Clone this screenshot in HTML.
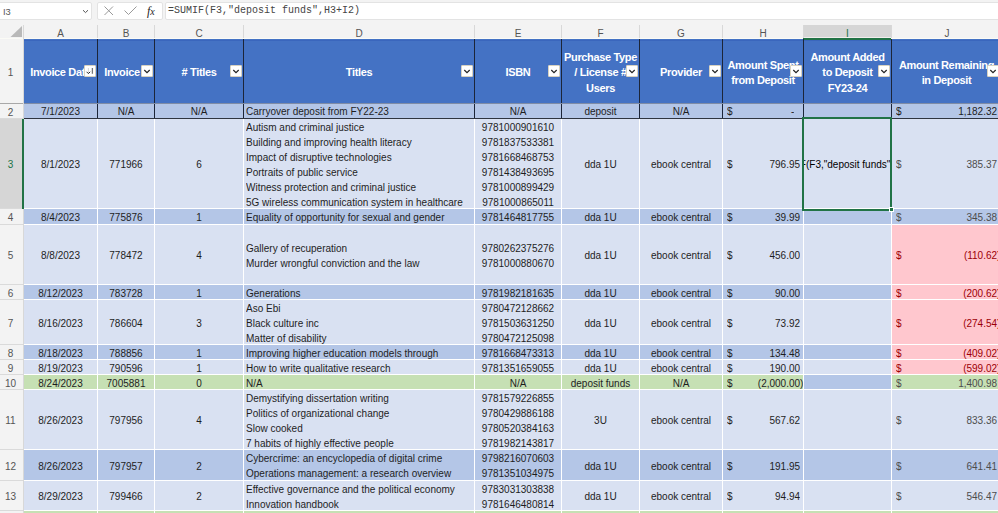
<!DOCTYPE html><html><head><meta charset="utf-8"><style>
*{margin:0;padding:0}
html,body{width:998px;height:513px;overflow:hidden;background:#f3f3f3;}
body{position:relative;font-family:"Liberation Sans",sans-serif;}
body>div,body>svg{position:absolute;}
.ui{position:absolute;white-space:pre;}
.t{display:flex;align-items:center;overflow:hidden;font-size:10px;line-height:15px;white-space:pre;}
.t span{display:block;position:relative;top:1px;}
.h{display:flex;align-items:center;overflow:hidden;font-size:11px;letter-spacing:-0.35px;line-height:15.7px;font-weight:bold;white-space:pre;}
.h span{display:block;position:relative;top:2.3px;}
.fb{width:12px;height:12px;box-sizing:border-box;background:#fff;border:1px solid #d8d2c0;border-radius:1px;}
</style></head><body><div style="left:0px;top:0px;width:998px;height:39px;background:#f3f3f3;"></div>
<div style="left:-3px;top:2px;width:95px;height:18px;background:#fff;box-sizing:border-box;border:1px solid #e3e3e3;border-radius:2px;"></div>
<div class="ui" style="left:3px;top:7px;font-size:9.3px;color:#555;">I3</div>
<svg style="position:absolute;left:82px;top:9px" width="7" height="5"><path d="M1 1.2 L3.5 3.6 L6 1.2" stroke="#555" stroke-width="1" fill="none"/></svg>
<div style="left:97px;top:2px;width:66px;height:18px;background:#fff;box-sizing:border-box;border:1px solid #e3e3e3;border-radius:2px;"></div>
<svg style="position:absolute;left:103px;top:5px" width="12" height="11"><path d="M1.5 1.5 L10 10 M10 1.5 L1.5 10" stroke="#9a9a9a" stroke-width="1" fill="none"/></svg>
<svg style="position:absolute;left:123px;top:5px" width="15" height="11"><path d="M1.5 5.5 L5.5 9.5 L13.5 1.5" stroke="#9a9a9a" stroke-width="1" fill="none"/></svg>
<div class="ui" style="left:147px;top:4px;font-family:'Liberation Serif',serif;font-style:italic;font-size:12px;color:#222;">f<span style="font-size:10px">x</span></div>
<div style="left:165px;top:2px;width:840px;height:18px;background:#fff;box-sizing:border-box;border:1px solid #e3e3e3;border-radius:2px;"></div>
<div class="ui" style="left:168px;top:4.5px;font-family:'Liberation Mono',monospace;font-size:10px;color:#444;white-space:pre;">=SUMIF(F3,"deposit funds",H3+I2)</div>
<div style="left:0px;top:38px;width:998px;height:1px;background:#fbfbf6;"></div>
<div style="left:803px;top:25px;width:88px;height:12px;background:#d6d6d6;"></div>
<div style="left:803px;top:37px;width:88px;height:1px;background:#f2eeee;"></div>
<div style="left:97px;top:25px;width:1px;height:13px;background:#d8d8d8;"></div>
<div class="ui" style="left:24px;top:27px;width:73px;text-align:center;font-size:10px;line-height:13px;color:#555;">A</div>
<div style="left:154px;top:25px;width:1px;height:13px;background:#d8d8d8;"></div>
<div class="ui" style="left:98px;top:27px;width:56px;text-align:center;font-size:10px;line-height:13px;color:#555;">B</div>
<div style="left:243px;top:25px;width:1px;height:13px;background:#d8d8d8;"></div>
<div class="ui" style="left:155px;top:27px;width:88px;text-align:center;font-size:10px;line-height:13px;color:#555;">C</div>
<div style="left:474px;top:25px;width:1px;height:13px;background:#d8d8d8;"></div>
<div class="ui" style="left:244px;top:27px;width:230px;text-align:center;font-size:10px;line-height:13px;color:#555;">D</div>
<div style="left:561px;top:25px;width:1px;height:13px;background:#d8d8d8;"></div>
<div class="ui" style="left:475px;top:27px;width:86px;text-align:center;font-size:10px;line-height:13px;color:#555;">E</div>
<div style="left:639px;top:25px;width:1px;height:13px;background:#d8d8d8;"></div>
<div class="ui" style="left:562px;top:27px;width:77px;text-align:center;font-size:10px;line-height:13px;color:#555;">F</div>
<div style="left:722px;top:25px;width:1px;height:13px;background:#d8d8d8;"></div>
<div class="ui" style="left:640px;top:27px;width:82px;text-align:center;font-size:10px;line-height:13px;color:#555;">G</div>
<div style="left:803px;top:25px;width:1px;height:13px;background:#d8d8d8;"></div>
<div class="ui" style="left:723px;top:27px;width:80px;text-align:center;font-size:10px;line-height:13px;color:#555;">H</div>
<div style="left:891px;top:25px;width:1px;height:13px;background:#d8d8d8;"></div>
<div class="ui" style="left:804px;top:27px;width:87px;text-align:center;font-size:10px;line-height:13px;color:#217346;">I</div>
<div class="ui" style="left:892px;top:27px;width:110px;text-align:center;font-size:10px;line-height:13px;color:#555;">J</div>
<svg style="position:absolute;left:10px;top:25px" width="13" height="13"><path d="M12 1 L12 12 L0.5 12 Z" fill="#b9b9b9"/></svg>
<div style="left:23px;top:25px;width:1px;height:14px;background:#d8d8d8;"></div>
<div style="left:0px;top:39px;width:23px;height:474px;background:#f3f3f3;"></div>
<div style="left:23px;top:39px;width:1px;height:474px;background:#d8d8d8;"></div>
<div style="left:0px;top:103px;width:23px;height:1px;background:#a8a8a8;"></div>
<div class="ui" style="left:0px;top:40px;width:21px;height:64px;display:flex;align-items:center;justify-content:center;font-size:10px;color:#555;">1</div>
<div style="left:0px;top:118px;width:23px;height:1px;background:#dadada;"></div>
<div class="ui" style="left:0px;top:105px;width:21px;height:14px;display:flex;align-items:center;justify-content:center;font-size:10px;color:#555;">2</div>
<div style="left:0px;top:119px;width:22px;height:89px;background:#d6d6d6;"></div>
<div style="left:0px;top:208px;width:23px;height:1px;background:#dadada;"></div>
<div class="ui" style="left:0px;top:120px;width:21px;height:89px;display:flex;align-items:center;justify-content:center;font-size:10px;color:#217346;">3</div>
<div style="left:0px;top:224px;width:23px;height:1px;background:#dadada;"></div>
<div class="ui" style="left:0px;top:210px;width:21px;height:15px;display:flex;align-items:center;justify-content:center;font-size:10px;color:#555;">4</div>
<div style="left:0px;top:284px;width:23px;height:1px;background:#dadada;"></div>
<div class="ui" style="left:0px;top:226px;width:21px;height:59px;display:flex;align-items:center;justify-content:center;font-size:10px;color:#555;">5</div>
<div style="left:0px;top:299px;width:23px;height:1px;background:#dadada;"></div>
<div class="ui" style="left:0px;top:286px;width:21px;height:14px;display:flex;align-items:center;justify-content:center;font-size:10px;color:#555;">6</div>
<div style="left:0px;top:344px;width:23px;height:1px;background:#dadada;"></div>
<div class="ui" style="left:0px;top:301px;width:21px;height:44px;display:flex;align-items:center;justify-content:center;font-size:10px;color:#555;">7</div>
<div style="left:0px;top:359px;width:23px;height:1px;background:#dadada;"></div>
<div class="ui" style="left:0px;top:346px;width:21px;height:14px;display:flex;align-items:center;justify-content:center;font-size:10px;color:#555;">8</div>
<div style="left:0px;top:374px;width:23px;height:1px;background:#dadada;"></div>
<div class="ui" style="left:0px;top:361px;width:21px;height:14px;display:flex;align-items:center;justify-content:center;font-size:10px;color:#555;">9</div>
<div style="left:0px;top:389px;width:23px;height:1px;background:#dadada;"></div>
<div class="ui" style="left:0px;top:376px;width:21px;height:14px;display:flex;align-items:center;justify-content:center;font-size:10px;color:#555;">10</div>
<div style="left:0px;top:449px;width:23px;height:1px;background:#dadada;"></div>
<div class="ui" style="left:0px;top:391px;width:21px;height:59px;display:flex;align-items:center;justify-content:center;font-size:10px;color:#555;">11</div>
<div style="left:0px;top:480px;width:23px;height:1px;background:#dadada;"></div>
<div class="ui" style="left:0px;top:451px;width:21px;height:30px;display:flex;align-items:center;justify-content:center;font-size:10px;color:#555;">12</div>
<div style="left:0px;top:510px;width:23px;height:1px;background:#dadada;"></div>
<div class="ui" style="left:0px;top:482px;width:21px;height:29px;display:flex;align-items:center;justify-content:center;font-size:10px;color:#555;">13</div>
<div style="left:0px;top:530px;width:23px;height:1px;background:#dadada;"></div>
<div class="ui" style="left:0px;top:512px;width:21px;height:19px;display:flex;align-items:center;justify-content:center;font-size:10px;color:#555;">14</div>
<div style="left:22px;top:119px;width:2px;height:90px;background:#217346;"></div>
<div style="left:24px;top:39px;width:974px;height:474px;background:#ffffff;"></div>
<div style="left:24px;top:39px;width:73px;height:64px;background:#4472c4;"></div>
<div style="left:98px;top:39px;width:56px;height:64px;background:#4472c4;"></div>
<div style="left:155px;top:39px;width:88px;height:64px;background:#4472c4;"></div>
<div style="left:244px;top:39px;width:230px;height:64px;background:#4472c4;"></div>
<div style="left:475px;top:39px;width:86px;height:64px;background:#4472c4;"></div>
<div style="left:562px;top:39px;width:77px;height:64px;background:#4472c4;"></div>
<div style="left:640px;top:39px;width:82px;height:64px;background:#4472c4;"></div>
<div style="left:723px;top:39px;width:80px;height:64px;background:#4472c4;"></div>
<div style="left:804px;top:39px;width:87px;height:64px;background:#4472c4;"></div>
<div style="left:892px;top:39px;width:109px;height:64px;background:#4472c4;"></div>
<div style="left:24px;top:104px;width:73px;height:14px;background:#b4c6e7;"></div>
<div style="left:98px;top:104px;width:56px;height:14px;background:#b4c6e7;"></div>
<div style="left:155px;top:104px;width:88px;height:14px;background:#b4c6e7;"></div>
<div style="left:244px;top:104px;width:230px;height:14px;background:#b4c6e7;"></div>
<div style="left:475px;top:104px;width:86px;height:14px;background:#b4c6e7;"></div>
<div style="left:562px;top:104px;width:77px;height:14px;background:#b4c6e7;"></div>
<div style="left:640px;top:104px;width:82px;height:14px;background:#b4c6e7;"></div>
<div style="left:723px;top:104px;width:80px;height:14px;background:#b4c6e7;"></div>
<div style="left:804px;top:104px;width:87px;height:14px;background:#b4c6e7;"></div>
<div style="left:892px;top:104px;width:109px;height:14px;background:#b4c6e7;"></div>
<div style="left:24px;top:119px;width:73px;height:89px;background:#d9e1f2;"></div>
<div style="left:98px;top:119px;width:56px;height:89px;background:#d9e1f2;"></div>
<div style="left:155px;top:119px;width:88px;height:89px;background:#d9e1f2;"></div>
<div style="left:244px;top:119px;width:230px;height:89px;background:#d9e1f2;"></div>
<div style="left:475px;top:119px;width:86px;height:89px;background:#d9e1f2;"></div>
<div style="left:562px;top:119px;width:77px;height:89px;background:#d9e1f2;"></div>
<div style="left:640px;top:119px;width:82px;height:89px;background:#d9e1f2;"></div>
<div style="left:723px;top:119px;width:80px;height:89px;background:#d9e1f2;"></div>
<div style="left:804px;top:119px;width:87px;height:89px;background:#d9e1f2;"></div>
<div style="left:892px;top:119px;width:109px;height:89px;background:#d9e1f2;"></div>
<div style="left:24px;top:209px;width:73px;height:15px;background:#b4c6e7;"></div>
<div style="left:98px;top:209px;width:56px;height:15px;background:#b4c6e7;"></div>
<div style="left:155px;top:209px;width:88px;height:15px;background:#b4c6e7;"></div>
<div style="left:244px;top:209px;width:230px;height:15px;background:#b4c6e7;"></div>
<div style="left:475px;top:209px;width:86px;height:15px;background:#b4c6e7;"></div>
<div style="left:562px;top:209px;width:77px;height:15px;background:#b4c6e7;"></div>
<div style="left:640px;top:209px;width:82px;height:15px;background:#b4c6e7;"></div>
<div style="left:723px;top:209px;width:80px;height:15px;background:#b4c6e7;"></div>
<div style="left:804px;top:209px;width:87px;height:15px;background:#b4c6e7;"></div>
<div style="left:892px;top:209px;width:109px;height:15px;background:#b4c6e7;"></div>
<div style="left:24px;top:225px;width:73px;height:59px;background:#d9e1f2;"></div>
<div style="left:98px;top:225px;width:56px;height:59px;background:#d9e1f2;"></div>
<div style="left:155px;top:225px;width:88px;height:59px;background:#d9e1f2;"></div>
<div style="left:244px;top:225px;width:230px;height:59px;background:#d9e1f2;"></div>
<div style="left:475px;top:225px;width:86px;height:59px;background:#d9e1f2;"></div>
<div style="left:562px;top:225px;width:77px;height:59px;background:#d9e1f2;"></div>
<div style="left:640px;top:225px;width:82px;height:59px;background:#d9e1f2;"></div>
<div style="left:723px;top:225px;width:80px;height:59px;background:#d9e1f2;"></div>
<div style="left:804px;top:225px;width:87px;height:59px;background:#d9e1f2;"></div>
<div style="left:892px;top:225px;width:109px;height:59px;background:#ffc7ce;"></div>
<div style="left:24px;top:285px;width:73px;height:14px;background:#b4c6e7;"></div>
<div style="left:98px;top:285px;width:56px;height:14px;background:#b4c6e7;"></div>
<div style="left:155px;top:285px;width:88px;height:14px;background:#b4c6e7;"></div>
<div style="left:244px;top:285px;width:230px;height:14px;background:#b4c6e7;"></div>
<div style="left:475px;top:285px;width:86px;height:14px;background:#b4c6e7;"></div>
<div style="left:562px;top:285px;width:77px;height:14px;background:#b4c6e7;"></div>
<div style="left:640px;top:285px;width:82px;height:14px;background:#b4c6e7;"></div>
<div style="left:723px;top:285px;width:80px;height:14px;background:#b4c6e7;"></div>
<div style="left:804px;top:285px;width:87px;height:14px;background:#b4c6e7;"></div>
<div style="left:892px;top:285px;width:109px;height:14px;background:#ffc7ce;"></div>
<div style="left:24px;top:300px;width:73px;height:44px;background:#d9e1f2;"></div>
<div style="left:98px;top:300px;width:56px;height:44px;background:#d9e1f2;"></div>
<div style="left:155px;top:300px;width:88px;height:44px;background:#d9e1f2;"></div>
<div style="left:244px;top:300px;width:230px;height:44px;background:#d9e1f2;"></div>
<div style="left:475px;top:300px;width:86px;height:44px;background:#d9e1f2;"></div>
<div style="left:562px;top:300px;width:77px;height:44px;background:#d9e1f2;"></div>
<div style="left:640px;top:300px;width:82px;height:44px;background:#d9e1f2;"></div>
<div style="left:723px;top:300px;width:80px;height:44px;background:#d9e1f2;"></div>
<div style="left:804px;top:300px;width:87px;height:44px;background:#d9e1f2;"></div>
<div style="left:892px;top:300px;width:109px;height:44px;background:#ffc7ce;"></div>
<div style="left:24px;top:345px;width:73px;height:14px;background:#b4c6e7;"></div>
<div style="left:98px;top:345px;width:56px;height:14px;background:#b4c6e7;"></div>
<div style="left:155px;top:345px;width:88px;height:14px;background:#b4c6e7;"></div>
<div style="left:244px;top:345px;width:230px;height:14px;background:#b4c6e7;"></div>
<div style="left:475px;top:345px;width:86px;height:14px;background:#b4c6e7;"></div>
<div style="left:562px;top:345px;width:77px;height:14px;background:#b4c6e7;"></div>
<div style="left:640px;top:345px;width:82px;height:14px;background:#b4c6e7;"></div>
<div style="left:723px;top:345px;width:80px;height:14px;background:#b4c6e7;"></div>
<div style="left:804px;top:345px;width:87px;height:14px;background:#b4c6e7;"></div>
<div style="left:892px;top:345px;width:109px;height:14px;background:#ffc7ce;"></div>
<div style="left:24px;top:360px;width:73px;height:14px;background:#d9e1f2;"></div>
<div style="left:98px;top:360px;width:56px;height:14px;background:#d9e1f2;"></div>
<div style="left:155px;top:360px;width:88px;height:14px;background:#d9e1f2;"></div>
<div style="left:244px;top:360px;width:230px;height:14px;background:#d9e1f2;"></div>
<div style="left:475px;top:360px;width:86px;height:14px;background:#d9e1f2;"></div>
<div style="left:562px;top:360px;width:77px;height:14px;background:#d9e1f2;"></div>
<div style="left:640px;top:360px;width:82px;height:14px;background:#d9e1f2;"></div>
<div style="left:723px;top:360px;width:80px;height:14px;background:#d9e1f2;"></div>
<div style="left:804px;top:360px;width:87px;height:14px;background:#d9e1f2;"></div>
<div style="left:892px;top:360px;width:109px;height:14px;background:#ffc7ce;"></div>
<div style="left:24px;top:375px;width:73px;height:14px;background:#c6e0b4;"></div>
<div style="left:98px;top:375px;width:56px;height:14px;background:#c6e0b4;"></div>
<div style="left:155px;top:375px;width:88px;height:14px;background:#c6e0b4;"></div>
<div style="left:244px;top:375px;width:230px;height:14px;background:#c6e0b4;"></div>
<div style="left:475px;top:375px;width:86px;height:14px;background:#c6e0b4;"></div>
<div style="left:562px;top:375px;width:77px;height:14px;background:#c6e0b4;"></div>
<div style="left:640px;top:375px;width:82px;height:14px;background:#c6e0b4;"></div>
<div style="left:723px;top:375px;width:80px;height:14px;background:#c6e0b4;"></div>
<div style="left:804px;top:375px;width:87px;height:14px;background:#b4c6e7;"></div>
<div style="left:892px;top:375px;width:109px;height:14px;background:#c6e0b4;"></div>
<div style="left:24px;top:390px;width:73px;height:59px;background:#d9e1f2;"></div>
<div style="left:98px;top:390px;width:56px;height:59px;background:#d9e1f2;"></div>
<div style="left:155px;top:390px;width:88px;height:59px;background:#d9e1f2;"></div>
<div style="left:244px;top:390px;width:230px;height:59px;background:#d9e1f2;"></div>
<div style="left:475px;top:390px;width:86px;height:59px;background:#d9e1f2;"></div>
<div style="left:562px;top:390px;width:77px;height:59px;background:#d9e1f2;"></div>
<div style="left:640px;top:390px;width:82px;height:59px;background:#d9e1f2;"></div>
<div style="left:723px;top:390px;width:80px;height:59px;background:#d9e1f2;"></div>
<div style="left:804px;top:390px;width:87px;height:59px;background:#d9e1f2;"></div>
<div style="left:892px;top:390px;width:109px;height:59px;background:#d9e1f2;"></div>
<div style="left:24px;top:450px;width:73px;height:30px;background:#b4c6e7;"></div>
<div style="left:98px;top:450px;width:56px;height:30px;background:#b4c6e7;"></div>
<div style="left:155px;top:450px;width:88px;height:30px;background:#b4c6e7;"></div>
<div style="left:244px;top:450px;width:230px;height:30px;background:#b4c6e7;"></div>
<div style="left:475px;top:450px;width:86px;height:30px;background:#b4c6e7;"></div>
<div style="left:562px;top:450px;width:77px;height:30px;background:#b4c6e7;"></div>
<div style="left:640px;top:450px;width:82px;height:30px;background:#b4c6e7;"></div>
<div style="left:723px;top:450px;width:80px;height:30px;background:#b4c6e7;"></div>
<div style="left:804px;top:450px;width:87px;height:30px;background:#b4c6e7;"></div>
<div style="left:892px;top:450px;width:109px;height:30px;background:#b4c6e7;"></div>
<div style="left:24px;top:481px;width:73px;height:29px;background:#d9e1f2;"></div>
<div style="left:98px;top:481px;width:56px;height:29px;background:#d9e1f2;"></div>
<div style="left:155px;top:481px;width:88px;height:29px;background:#d9e1f2;"></div>
<div style="left:244px;top:481px;width:230px;height:29px;background:#d9e1f2;"></div>
<div style="left:475px;top:481px;width:86px;height:29px;background:#d9e1f2;"></div>
<div style="left:562px;top:481px;width:77px;height:29px;background:#d9e1f2;"></div>
<div style="left:640px;top:481px;width:82px;height:29px;background:#d9e1f2;"></div>
<div style="left:723px;top:481px;width:80px;height:29px;background:#d9e1f2;"></div>
<div style="left:804px;top:481px;width:87px;height:29px;background:#d9e1f2;"></div>
<div style="left:892px;top:481px;width:109px;height:29px;background:#d9e1f2;"></div>
<div style="left:24px;top:511px;width:73px;height:19px;background:#c6e0b4;"></div>
<div style="left:98px;top:511px;width:56px;height:19px;background:#c6e0b4;"></div>
<div style="left:155px;top:511px;width:88px;height:19px;background:#c6e0b4;"></div>
<div style="left:244px;top:511px;width:230px;height:19px;background:#c6e0b4;"></div>
<div style="left:475px;top:511px;width:86px;height:19px;background:#c6e0b4;"></div>
<div style="left:562px;top:511px;width:77px;height:19px;background:#c6e0b4;"></div>
<div style="left:640px;top:511px;width:82px;height:19px;background:#c6e0b4;"></div>
<div style="left:723px;top:511px;width:80px;height:19px;background:#c6e0b4;"></div>
<div style="left:804px;top:511px;width:87px;height:19px;background:#c6e0b4;"></div>
<div style="left:892px;top:511px;width:109px;height:19px;background:#c6e0b4;"></div>
<div style="left:24px;top:40px;width:974px;height:1px;background:#3a66bd;"></div>
<div style="left:803px;top:38px;width:88px;height:2px;background:#217346;"></div>
<div style="left:97px;top:39px;width:1px;height:80px;background:#1c2538;"></div>
<div style="left:154px;top:39px;width:1px;height:80px;background:#1c2538;"></div>
<div style="left:243px;top:39px;width:1px;height:80px;background:#1c2538;"></div>
<div style="left:474px;top:39px;width:1px;height:80px;background:#1c2538;"></div>
<div style="left:561px;top:39px;width:1px;height:80px;background:#1c2538;"></div>
<div style="left:639px;top:39px;width:1px;height:80px;background:#1c2538;"></div>
<div style="left:722px;top:39px;width:1px;height:80px;background:#1c2538;"></div>
<div style="left:803px;top:39px;width:1px;height:80px;background:#1c2538;"></div>
<div style="left:891px;top:39px;width:1px;height:80px;background:#1c2538;"></div>
<div style="left:24px;top:103px;width:974px;height:1px;background:#7f8ca6;"></div>
<div style="left:24px;top:118px;width:974px;height:1px;background:#2e3440;"></div>
<div class="h" style="left:24px;top:39px;width:73px;height:64px;justify-content:center;text-align:center;color:#fff;"><span>Invoice Date</span></div>
<div class="h" style="left:98px;top:39px;width:48px;height:64px;justify-content:center;text-align:center;color:#fff;"><span>Invoice</span></div>
<div class="h" style="left:155px;top:39px;width:88px;height:64px;justify-content:center;text-align:center;color:#fff;"><span># Titles</span></div>
<div class="h" style="left:244px;top:39px;width:230px;height:64px;justify-content:center;text-align:center;color:#fff;"><span>Titles</span></div>
<div class="h" style="left:475px;top:39px;width:86px;height:64px;justify-content:center;text-align:center;color:#fff;"><span>ISBN</span></div>
<div class="h" style="left:562px;top:39px;width:77px;height:64px;justify-content:center;text-align:center;color:#fff;"><span>Purchase Type<br>/ License #<br>Users</span></div>
<div class="h" style="left:640px;top:39px;width:82px;height:64px;justify-content:center;text-align:center;color:#fff;"><span>Provider</span></div>
<div class="h" style="left:723px;top:39px;width:80px;height:64px;justify-content:center;text-align:center;color:#fff;"><span>Amount Spent<br>from Deposit</span></div>
<div class="h" style="left:804px;top:39px;width:87px;height:64px;justify-content:center;text-align:center;color:#fff;"><span>Amount Added<br>to Deposit<br>FY23-24</span></div>
<div class="h" style="left:892px;top:39px;width:109px;height:64px;justify-content:center;text-align:center;color:#fff;"><span>Amount Remaining<br>in Deposit</span></div>
<div class="fb" style="left:84px;top:65px;"></div>
<svg style="position:absolute;left:84px;top:65px" width="12" height="12"><path d="M2.6 6.8 L4.4 8.6 L6.2 6.8" stroke="#222" stroke-width="1" fill="none"/><path d="M4.4 3 L4.4 8" stroke="#ccc" stroke-width="0.8"/><path d="M8.4 3 L8.4 8.8" stroke="#777" stroke-width="1.3"/></svg>
<div class="fb" style="left:141px;top:65px;"></div>
<svg style="position:absolute;left:141px;top:65px" width="12" height="12"><path d="M3.3 5 L6 7.6 L8.7 5" stroke="#222" stroke-width="1.2" fill="none"/></svg>
<div class="fb" style="left:230px;top:65px;"></div>
<svg style="position:absolute;left:230px;top:65px" width="12" height="12"><path d="M3.3 5 L6 7.6 L8.7 5" stroke="#222" stroke-width="1.2" fill="none"/></svg>
<div class="fb" style="left:461px;top:65px;"></div>
<svg style="position:absolute;left:461px;top:65px" width="12" height="12"><path d="M3.3 5 L6 7.6 L8.7 5" stroke="#222" stroke-width="1.2" fill="none"/></svg>
<div class="fb" style="left:548px;top:65px;"></div>
<svg style="position:absolute;left:548px;top:65px" width="12" height="12"><path d="M3.3 5 L6 7.6 L8.7 5" stroke="#222" stroke-width="1.2" fill="none"/></svg>
<div class="fb" style="left:626px;top:65px;"></div>
<svg style="position:absolute;left:626px;top:65px" width="12" height="12"><path d="M3.3 5 L6 7.6 L8.7 5" stroke="#222" stroke-width="1.2" fill="none"/></svg>
<div class="fb" style="left:709px;top:65px;"></div>
<svg style="position:absolute;left:709px;top:65px" width="12" height="12"><path d="M3.3 5 L6 7.6 L8.7 5" stroke="#222" stroke-width="1.2" fill="none"/></svg>
<div class="fb" style="left:790px;top:65px;"></div>
<svg style="position:absolute;left:790px;top:65px" width="12" height="12"><path d="M3.3 5 L6 7.6 L8.7 5" stroke="#222" stroke-width="1.2" fill="none"/></svg>
<div class="fb" style="left:878px;top:65px;"></div>
<svg style="position:absolute;left:878px;top:65px" width="12" height="12"><path d="M3.3 5 L6 7.6 L8.7 5" stroke="#222" stroke-width="1.2" fill="none"/></svg>
<div class="fb" style="left:987px;top:65px;"></div>
<svg style="position:absolute;left:987px;top:65px" width="12" height="12"><path d="M3.3 5 L6 7.6 L8.7 5" stroke="#222" stroke-width="1.2" fill="none"/></svg>
<div class="t" style="left:24px;top:104px;width:73px;height:14px;justify-content:center;text-align:center;color:#1e1e1e;margin-top:-0.8px;"><span>7/1/2023</span></div>
<div class="t" style="left:98px;top:104px;width:56px;height:14px;justify-content:center;text-align:center;color:#1e1e1e;margin-top:-0.8px;"><span>N/A</span></div>
<div class="t" style="left:155px;top:104px;width:88px;height:14px;justify-content:center;text-align:center;color:#1e1e1e;margin-top:-0.8px;"><span>N/A</span></div>
<div class="t" style="left:246px;top:104px;width:228px;height:14px;justify-content:flex-start;text-align:left;color:#1e1e1e;margin-top:-0.8px;"><span>Carryover deposit from FY22-23</span></div>
<div class="t" style="left:475px;top:104px;width:86px;height:14px;justify-content:center;text-align:center;color:#1e1e1e;margin-top:-0.8px;"><span>N/A</span></div>
<div class="t" style="left:562px;top:104px;width:77px;height:14px;justify-content:center;text-align:center;color:#1e1e1e;margin-top:-0.8px;"><span>deposit</span></div>
<div class="t" style="left:640px;top:104px;width:82px;height:14px;justify-content:center;text-align:center;color:#1e1e1e;margin-top:-0.8px;"><span>N/A</span></div>
<div class="t" style="left:727px;top:104px;width:12px;height:14px;justify-content:flex-start;text-align:left;color:#1e1e1e;margin-top:-0.8px;"><span>$</span></div>
<div class="t" style="left:723px;top:104px;width:71.39999999999998px;height:14px;justify-content:flex-end;text-align:right;color:#1e1e1e;margin-top:-0.8px;"><span>-</span></div>
<div class="t" style="left:896px;top:104px;width:12px;height:14px;justify-content:flex-start;text-align:left;color:#1e1e1e;margin-top:-0.8px;"><span>$</span></div>
<div class="t" style="left:892px;top:104px;width:105.09999999999998px;height:14px;justify-content:flex-end;text-align:right;color:#1e1e1e;margin-top:-0.8px;"><span>1,182.32</span></div>
<div class="t" style="left:24px;top:119px;width:73px;height:89px;justify-content:center;text-align:center;color:#1e1e1e;"><span>8/1/2023</span></div>
<div class="t" style="left:98px;top:119px;width:56px;height:89px;justify-content:center;text-align:center;color:#1e1e1e;"><span>771966</span></div>
<div class="t" style="left:155px;top:119px;width:88px;height:89px;justify-content:center;text-align:center;color:#1e1e1e;"><span>6</span></div>
<div class="t" style="left:246px;top:119px;width:228px;height:89px;justify-content:flex-start;text-align:left;color:#1e1e1e;"><span>Autism and criminal justice<br>Building and improving health literacy<br>Impact of disruptive technologies<br>Portraits of public service<br>Witness protection and criminal justice<br>5G wireless communication system in healthcare</span></div>
<div class="t" style="left:475px;top:119px;width:86px;height:89px;justify-content:center;text-align:center;color:#1e1e1e;"><span>9781000901610<br>9781837533381<br>9781668468753<br>9781438493695<br>9781000899429<br>9781000865011</span></div>
<div class="t" style="left:562px;top:119px;width:77px;height:89px;justify-content:center;text-align:center;color:#1e1e1e;"><span>dda 1U</span></div>
<div class="t" style="left:640px;top:119px;width:82px;height:89px;justify-content:center;text-align:center;color:#1e1e1e;"><span>ebook central</span></div>
<div class="t" style="left:727px;top:119px;width:12px;height:89px;justify-content:flex-start;text-align:left;color:#1e1e1e;"><span>$</span></div>
<div class="t" style="left:723px;top:119px;width:77.09999999999998px;height:89px;justify-content:flex-end;text-align:right;color:#1e1e1e;"><span>796.95</span></div>
<div class="t" style="left:804px;top:119px;width:87px;height:89px;"><span style="position:absolute;left:-35px;top:50%;margin-top:-7px;white-space:pre;">=SUMIF(F3,"deposit funds",H3+I2)</span></div>
<div class="t" style="left:896px;top:119px;width:12px;height:89px;justify-content:flex-start;text-align:left;color:#4d4d4d;"><span>$</span></div>
<div class="t" style="left:892px;top:119px;width:105.09999999999998px;height:89px;justify-content:flex-end;text-align:right;color:#4d4d4d;"><span>385.37</span></div>
<div class="t" style="left:24px;top:209px;width:73px;height:15px;justify-content:center;text-align:center;color:#1e1e1e;"><span>8/4/2023</span></div>
<div class="t" style="left:98px;top:209px;width:56px;height:15px;justify-content:center;text-align:center;color:#1e1e1e;"><span>775876</span></div>
<div class="t" style="left:155px;top:209px;width:88px;height:15px;justify-content:center;text-align:center;color:#1e1e1e;"><span>1</span></div>
<div class="t" style="left:246px;top:209px;width:228px;height:15px;justify-content:flex-start;text-align:left;color:#1e1e1e;"><span>Equality of opportunity for sexual and gender</span></div>
<div class="t" style="left:475px;top:209px;width:86px;height:15px;justify-content:center;text-align:center;color:#1e1e1e;"><span>9781464817755</span></div>
<div class="t" style="left:562px;top:209px;width:77px;height:15px;justify-content:center;text-align:center;color:#1e1e1e;"><span>dda 1U</span></div>
<div class="t" style="left:640px;top:209px;width:82px;height:15px;justify-content:center;text-align:center;color:#1e1e1e;"><span>ebook central</span></div>
<div class="t" style="left:727px;top:209px;width:12px;height:15px;justify-content:flex-start;text-align:left;color:#1e1e1e;"><span>$</span></div>
<div class="t" style="left:723px;top:209px;width:77.09999999999998px;height:15px;justify-content:flex-end;text-align:right;color:#1e1e1e;"><span>39.99</span></div>
<div class="t" style="left:896px;top:209px;width:12px;height:15px;justify-content:flex-start;text-align:left;color:#4d4d4d;"><span>$</span></div>
<div class="t" style="left:892px;top:209px;width:105.09999999999998px;height:15px;justify-content:flex-end;text-align:right;color:#4d4d4d;"><span>345.38</span></div>
<div class="t" style="left:24px;top:225px;width:73px;height:59px;justify-content:center;text-align:center;color:#1e1e1e;"><span>8/8/2023</span></div>
<div class="t" style="left:98px;top:225px;width:56px;height:59px;justify-content:center;text-align:center;color:#1e1e1e;"><span>778472</span></div>
<div class="t" style="left:155px;top:225px;width:88px;height:59px;justify-content:center;text-align:center;color:#1e1e1e;"><span>4</span></div>
<div class="t" style="left:246px;top:225px;width:228px;height:59px;justify-content:flex-start;text-align:left;color:#1e1e1e;"><span>Gallery of recuperation<br>Murder wrongful conviction and the law</span></div>
<div class="t" style="left:475px;top:225px;width:86px;height:59px;justify-content:center;text-align:center;color:#1e1e1e;"><span>9780262375276<br>9781000880670</span></div>
<div class="t" style="left:562px;top:225px;width:77px;height:59px;justify-content:center;text-align:center;color:#1e1e1e;"><span>dda 1U</span></div>
<div class="t" style="left:640px;top:225px;width:82px;height:59px;justify-content:center;text-align:center;color:#1e1e1e;"><span>ebook central</span></div>
<div class="t" style="left:727px;top:225px;width:12px;height:59px;justify-content:flex-start;text-align:left;color:#1e1e1e;"><span>$</span></div>
<div class="t" style="left:723px;top:225px;width:77.09999999999998px;height:59px;justify-content:flex-end;text-align:right;color:#1e1e1e;"><span>456.00</span></div>
<div class="t" style="left:896px;top:225px;width:12px;height:59px;justify-content:flex-start;text-align:left;color:#9c0006;"><span>$</span></div>
<div class="t" style="left:892px;top:225px;width:108.39999999999998px;height:59px;justify-content:flex-end;text-align:right;color:#9c0006;"><span>(110.62)</span></div>
<div class="t" style="left:24px;top:285px;width:73px;height:14px;justify-content:center;text-align:center;color:#1e1e1e;"><span>8/12/2023</span></div>
<div class="t" style="left:98px;top:285px;width:56px;height:14px;justify-content:center;text-align:center;color:#1e1e1e;"><span>783728</span></div>
<div class="t" style="left:155px;top:285px;width:88px;height:14px;justify-content:center;text-align:center;color:#1e1e1e;"><span>1</span></div>
<div class="t" style="left:246px;top:285px;width:228px;height:14px;justify-content:flex-start;text-align:left;color:#1e1e1e;"><span>Generations</span></div>
<div class="t" style="left:475px;top:285px;width:86px;height:14px;justify-content:center;text-align:center;color:#1e1e1e;"><span>9781982181635</span></div>
<div class="t" style="left:562px;top:285px;width:77px;height:14px;justify-content:center;text-align:center;color:#1e1e1e;"><span>dda 1U</span></div>
<div class="t" style="left:640px;top:285px;width:82px;height:14px;justify-content:center;text-align:center;color:#1e1e1e;"><span>ebook central</span></div>
<div class="t" style="left:727px;top:285px;width:12px;height:14px;justify-content:flex-start;text-align:left;color:#1e1e1e;"><span>$</span></div>
<div class="t" style="left:723px;top:285px;width:77.09999999999998px;height:14px;justify-content:flex-end;text-align:right;color:#1e1e1e;"><span>90.00</span></div>
<div class="t" style="left:896px;top:285px;width:12px;height:14px;justify-content:flex-start;text-align:left;color:#9c0006;"><span>$</span></div>
<div class="t" style="left:892px;top:285px;width:108.39999999999998px;height:14px;justify-content:flex-end;text-align:right;color:#9c0006;"><span>(200.62)</span></div>
<div class="t" style="left:24px;top:300px;width:73px;height:44px;justify-content:center;text-align:center;color:#1e1e1e;"><span>8/16/2023</span></div>
<div class="t" style="left:98px;top:300px;width:56px;height:44px;justify-content:center;text-align:center;color:#1e1e1e;"><span>786604</span></div>
<div class="t" style="left:155px;top:300px;width:88px;height:44px;justify-content:center;text-align:center;color:#1e1e1e;"><span>3</span></div>
<div class="t" style="left:246px;top:300px;width:228px;height:44px;justify-content:flex-start;text-align:left;color:#1e1e1e;"><span>Aso Ebi<br>Black culture inc<br>Matter of disability</span></div>
<div class="t" style="left:475px;top:300px;width:86px;height:44px;justify-content:center;text-align:center;color:#1e1e1e;"><span>9780472128662<br>9781503631250<br>9780472125098</span></div>
<div class="t" style="left:562px;top:300px;width:77px;height:44px;justify-content:center;text-align:center;color:#1e1e1e;"><span>dda 1U</span></div>
<div class="t" style="left:640px;top:300px;width:82px;height:44px;justify-content:center;text-align:center;color:#1e1e1e;"><span>ebook central</span></div>
<div class="t" style="left:727px;top:300px;width:12px;height:44px;justify-content:flex-start;text-align:left;color:#1e1e1e;"><span>$</span></div>
<div class="t" style="left:723px;top:300px;width:77.09999999999998px;height:44px;justify-content:flex-end;text-align:right;color:#1e1e1e;"><span>73.92</span></div>
<div class="t" style="left:896px;top:300px;width:12px;height:44px;justify-content:flex-start;text-align:left;color:#9c0006;"><span>$</span></div>
<div class="t" style="left:892px;top:300px;width:108.39999999999998px;height:44px;justify-content:flex-end;text-align:right;color:#9c0006;"><span>(274.54)</span></div>
<div class="t" style="left:24px;top:345px;width:73px;height:14px;justify-content:center;text-align:center;color:#1e1e1e;"><span>8/18/2023</span></div>
<div class="t" style="left:98px;top:345px;width:56px;height:14px;justify-content:center;text-align:center;color:#1e1e1e;"><span>788856</span></div>
<div class="t" style="left:155px;top:345px;width:88px;height:14px;justify-content:center;text-align:center;color:#1e1e1e;"><span>1</span></div>
<div class="t" style="left:246px;top:345px;width:228px;height:14px;justify-content:flex-start;text-align:left;color:#1e1e1e;"><span>Improving higher education models through</span></div>
<div class="t" style="left:475px;top:345px;width:86px;height:14px;justify-content:center;text-align:center;color:#1e1e1e;"><span>9781668473313</span></div>
<div class="t" style="left:562px;top:345px;width:77px;height:14px;justify-content:center;text-align:center;color:#1e1e1e;"><span>dda 1U</span></div>
<div class="t" style="left:640px;top:345px;width:82px;height:14px;justify-content:center;text-align:center;color:#1e1e1e;"><span>ebook central</span></div>
<div class="t" style="left:727px;top:345px;width:12px;height:14px;justify-content:flex-start;text-align:left;color:#1e1e1e;"><span>$</span></div>
<div class="t" style="left:723px;top:345px;width:77.09999999999998px;height:14px;justify-content:flex-end;text-align:right;color:#1e1e1e;"><span>134.48</span></div>
<div class="t" style="left:896px;top:345px;width:12px;height:14px;justify-content:flex-start;text-align:left;color:#9c0006;"><span>$</span></div>
<div class="t" style="left:892px;top:345px;width:108.39999999999998px;height:14px;justify-content:flex-end;text-align:right;color:#9c0006;"><span>(409.02)</span></div>
<div class="t" style="left:24px;top:360px;width:73px;height:14px;justify-content:center;text-align:center;color:#1e1e1e;"><span>8/19/2023</span></div>
<div class="t" style="left:98px;top:360px;width:56px;height:14px;justify-content:center;text-align:center;color:#1e1e1e;"><span>790596</span></div>
<div class="t" style="left:155px;top:360px;width:88px;height:14px;justify-content:center;text-align:center;color:#1e1e1e;"><span>1</span></div>
<div class="t" style="left:246px;top:360px;width:228px;height:14px;justify-content:flex-start;text-align:left;color:#1e1e1e;"><span>How to write qualitative research</span></div>
<div class="t" style="left:475px;top:360px;width:86px;height:14px;justify-content:center;text-align:center;color:#1e1e1e;"><span>9781351659055</span></div>
<div class="t" style="left:562px;top:360px;width:77px;height:14px;justify-content:center;text-align:center;color:#1e1e1e;"><span>dda 1U</span></div>
<div class="t" style="left:640px;top:360px;width:82px;height:14px;justify-content:center;text-align:center;color:#1e1e1e;"><span>ebook central</span></div>
<div class="t" style="left:727px;top:360px;width:12px;height:14px;justify-content:flex-start;text-align:left;color:#1e1e1e;"><span>$</span></div>
<div class="t" style="left:723px;top:360px;width:77.09999999999998px;height:14px;justify-content:flex-end;text-align:right;color:#1e1e1e;"><span>190.00</span></div>
<div class="t" style="left:896px;top:360px;width:12px;height:14px;justify-content:flex-start;text-align:left;color:#9c0006;"><span>$</span></div>
<div class="t" style="left:892px;top:360px;width:108.39999999999998px;height:14px;justify-content:flex-end;text-align:right;color:#9c0006;"><span>(599.02)</span></div>
<div class="t" style="left:24px;top:375px;width:73px;height:14px;justify-content:center;text-align:center;color:#1e1e1e;"><span>8/24/2023</span></div>
<div class="t" style="left:98px;top:375px;width:56px;height:14px;justify-content:center;text-align:center;color:#1e1e1e;"><span>7005881</span></div>
<div class="t" style="left:155px;top:375px;width:88px;height:14px;justify-content:center;text-align:center;color:#1e1e1e;"><span>0</span></div>
<div class="t" style="left:246px;top:375px;width:228px;height:14px;justify-content:flex-start;text-align:left;color:#1e1e1e;"><span>N/A</span></div>
<div class="t" style="left:475px;top:375px;width:86px;height:14px;justify-content:center;text-align:center;color:#1e1e1e;"><span>N/A</span></div>
<div class="t" style="left:562px;top:375px;width:77px;height:14px;justify-content:center;text-align:center;color:#1e1e1e;"><span>deposit funds</span></div>
<div class="t" style="left:640px;top:375px;width:82px;height:14px;justify-content:center;text-align:center;color:#1e1e1e;"><span>N/A</span></div>
<div class="t" style="left:727px;top:375px;width:12px;height:14px;justify-content:flex-start;text-align:left;color:#1e1e1e;"><span>$</span></div>
<div class="t" style="left:723px;top:375px;width:80.39999999999998px;height:14px;justify-content:flex-end;text-align:right;color:#1e1e1e;"><span>(2,000.00)</span></div>
<div class="t" style="left:896px;top:375px;width:12px;height:14px;justify-content:flex-start;text-align:left;color:#4d4d4d;"><span>$</span></div>
<div class="t" style="left:892px;top:375px;width:105.09999999999998px;height:14px;justify-content:flex-end;text-align:right;color:#4d4d4d;"><span>1,400.98</span></div>
<div class="t" style="left:24px;top:390px;width:73px;height:59px;justify-content:center;text-align:center;color:#1e1e1e;"><span>8/26/2023</span></div>
<div class="t" style="left:98px;top:390px;width:56px;height:59px;justify-content:center;text-align:center;color:#1e1e1e;"><span>797956</span></div>
<div class="t" style="left:155px;top:390px;width:88px;height:59px;justify-content:center;text-align:center;color:#1e1e1e;"><span>4</span></div>
<div class="t" style="left:246px;top:390px;width:228px;height:59px;justify-content:flex-start;text-align:left;color:#1e1e1e;"><span>Demystifying dissertation writing<br>Politics of organizational change<br>Slow cooked<br>7 habits of highly effective people</span></div>
<div class="t" style="left:475px;top:390px;width:86px;height:59px;justify-content:center;text-align:center;color:#1e1e1e;"><span>9781579226855<br>9780429886188<br>9780520384163<br>9781982143817</span></div>
<div class="t" style="left:562px;top:390px;width:77px;height:59px;justify-content:center;text-align:center;color:#1e1e1e;"><span>3U</span></div>
<div class="t" style="left:640px;top:390px;width:82px;height:59px;justify-content:center;text-align:center;color:#1e1e1e;"><span>ebook central</span></div>
<div class="t" style="left:727px;top:390px;width:12px;height:59px;justify-content:flex-start;text-align:left;color:#1e1e1e;"><span>$</span></div>
<div class="t" style="left:723px;top:390px;width:77.09999999999998px;height:59px;justify-content:flex-end;text-align:right;color:#1e1e1e;"><span>567.62</span></div>
<div class="t" style="left:896px;top:390px;width:12px;height:59px;justify-content:flex-start;text-align:left;color:#4d4d4d;"><span>$</span></div>
<div class="t" style="left:892px;top:390px;width:105.09999999999998px;height:59px;justify-content:flex-end;text-align:right;color:#4d4d4d;"><span>833.36</span></div>
<div class="t" style="left:24px;top:450px;width:73px;height:30px;justify-content:center;text-align:center;color:#1e1e1e;"><span>8/26/2023</span></div>
<div class="t" style="left:98px;top:450px;width:56px;height:30px;justify-content:center;text-align:center;color:#1e1e1e;"><span>797957</span></div>
<div class="t" style="left:155px;top:450px;width:88px;height:30px;justify-content:center;text-align:center;color:#1e1e1e;"><span>2</span></div>
<div class="t" style="left:246px;top:450px;width:228px;height:30px;justify-content:flex-start;text-align:left;color:#1e1e1e;"><span>Cybercrime: an encyclopedia of digital crime<br>Operations management: a research overview</span></div>
<div class="t" style="left:475px;top:450px;width:86px;height:30px;justify-content:center;text-align:center;color:#1e1e1e;"><span>9798216070603<br>9781351034975</span></div>
<div class="t" style="left:562px;top:450px;width:77px;height:30px;justify-content:center;text-align:center;color:#1e1e1e;"><span>dda 1U</span></div>
<div class="t" style="left:640px;top:450px;width:82px;height:30px;justify-content:center;text-align:center;color:#1e1e1e;"><span>ebook central</span></div>
<div class="t" style="left:727px;top:450px;width:12px;height:30px;justify-content:flex-start;text-align:left;color:#1e1e1e;"><span>$</span></div>
<div class="t" style="left:723px;top:450px;width:77.09999999999998px;height:30px;justify-content:flex-end;text-align:right;color:#1e1e1e;"><span>191.95</span></div>
<div class="t" style="left:896px;top:450px;width:12px;height:30px;justify-content:flex-start;text-align:left;color:#4d4d4d;"><span>$</span></div>
<div class="t" style="left:892px;top:450px;width:105.09999999999998px;height:30px;justify-content:flex-end;text-align:right;color:#4d4d4d;"><span>641.41</span></div>
<div class="t" style="left:24px;top:481px;width:73px;height:29px;justify-content:center;text-align:center;color:#1e1e1e;"><span>8/29/2023</span></div>
<div class="t" style="left:98px;top:481px;width:56px;height:29px;justify-content:center;text-align:center;color:#1e1e1e;"><span>799466</span></div>
<div class="t" style="left:155px;top:481px;width:88px;height:29px;justify-content:center;text-align:center;color:#1e1e1e;"><span>2</span></div>
<div class="t" style="left:246px;top:481px;width:228px;height:29px;justify-content:flex-start;text-align:left;color:#1e1e1e;"><span>Effective governance and the political economy<br>Innovation handbook</span></div>
<div class="t" style="left:475px;top:481px;width:86px;height:29px;justify-content:center;text-align:center;color:#1e1e1e;"><span>9783031303838<br>9781646480814</span></div>
<div class="t" style="left:562px;top:481px;width:77px;height:29px;justify-content:center;text-align:center;color:#1e1e1e;"><span>dda 1U</span></div>
<div class="t" style="left:640px;top:481px;width:82px;height:29px;justify-content:center;text-align:center;color:#1e1e1e;"><span>ebook central</span></div>
<div class="t" style="left:727px;top:481px;width:12px;height:29px;justify-content:flex-start;text-align:left;color:#1e1e1e;"><span>$</span></div>
<div class="t" style="left:723px;top:481px;width:77.09999999999998px;height:29px;justify-content:flex-end;text-align:right;color:#1e1e1e;"><span>94.94</span></div>
<div class="t" style="left:896px;top:481px;width:12px;height:29px;justify-content:flex-start;text-align:left;color:#4d4d4d;"><span>$</span></div>
<div class="t" style="left:892px;top:481px;width:105.09999999999998px;height:29px;justify-content:flex-end;text-align:right;color:#4d4d4d;"><span>546.47</span></div>
<div style="left:802px;top:117px;width:90px;height:94px;box-sizing:border-box;border:2px solid #217346;"></div>
<div style="left:889px;top:207px;width:5px;height:5px;box-sizing:border-box;background:#217346;border:1px solid #fff;"></div></body></html>
